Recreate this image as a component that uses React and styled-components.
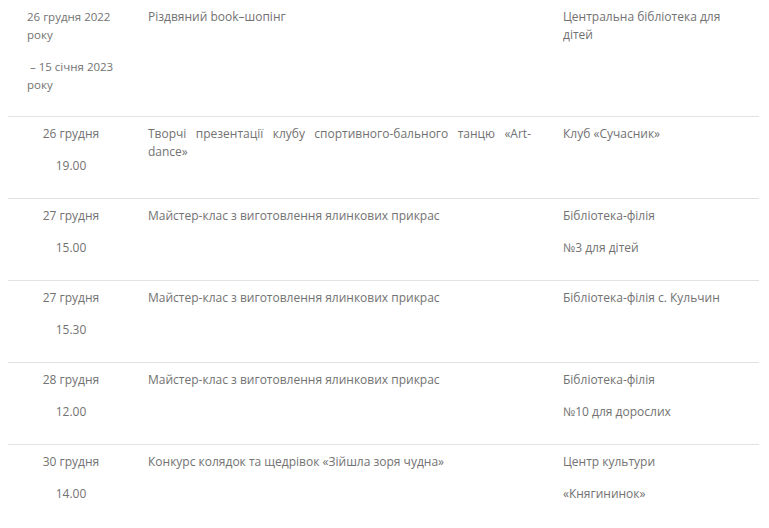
import React from 'react';
import styled, { createGlobalStyle } from 'styled-components';

const GlobalStyle = createGlobalStyle`
  body {
    margin: 0;
    background: #fff;
    font-family: "Open Sans", "Liberation Sans", sans-serif;
  }
`;

const Page = styled.div`
  padding: 0 8px;
`;

const Table = styled.div`
  width: 751px;
`;

const Row = styled.div`
  display: grid;
  grid-template-columns: 124px 415px 212px;
  border-top: ${(p) => (p.first ? 'none' : '1px solid #e2e2e2')};

  & > div {
    padding-bottom: ${(p) => (p.first ? 8 : 9)}px;
  }
`;

const Cell = styled.div`
  padding: 8px ${(p) => p.padRight || 16}px 9px ${(p) => p.padLeft || 16}px;
  text-align: ${(p) => p.align || 'left'};
`;

const Para = styled.p`
  margin: 0 0 14px;
  font-size: ${(p) => p.size || 12}px;
  line-height: 18px;
  color: #727272;
  text-align: ${(p) => p.align || 'inherit'};
`;

const events = [
  {
    date: ['26 грудня 2022 року', '\u00a0– 15 січня 2023 року'],
    dateAlign: 'left',
    dateSize: 11.5,
    title: 'Різдвяний book–шопінг',
    place: ['Центральна бібліотека для дітей'],
  },
  {
    date: ['26 грудня', '19.00'],
    title: 'Творчі презентації клубу спортивного-бального танцю «Art-dance»',
    place: ['Клуб «Сучасник»'],
  },
  {
    date: ['27 грудня', '15.00'],
    title: 'Майстер-клас з виготовлення ялинкових прикрас',
    place: ['Бібліотека-філія', '№3 для дітей'],
  },
  {
    date: ['27 грудня', '15.30'],
    title: 'Майстер-клас з виготовлення ялинкових прикрас',
    place: ['Бібліотека-філія с. Кульчин'],
  },
  {
    date: ['28 грудня', '12.00'],
    title: 'Майстер-клас з виготовлення ялинкових прикрас',
    place: ['Бібліотека-філія', '№10 для дорослих'],
  },
  {
    date: ['30 грудня', '14.00'],
    title: 'Конкурс колядок та щедрівок «Зійшла зоря чудна»',
    place: ['Центр культури', '«Княгининок»'],
  },
];

export default function App() {
  return (
    <>
      <GlobalStyle />
      <Page>
        <Table>
          {events.map((ev, i) => (
            <Row key={i} first={i === 0}>
              <Cell padLeft={19} padRight={17} align={ev.dateAlign || 'center'}>
                {ev.date.map((d, j) => (
                  <Para key={j} size={ev.dateSize}>{d}</Para>
                ))}
              </Cell>
              <Cell>
                <Para align="justify">{ev.title}</Para>
              </Cell>
              <Cell>
                {ev.place.map((p, j) => (
                  <Para key={j}>{p}</Para>
                ))}
              </Cell>
            </Row>
          ))}
        </Table>
      </Page>
    </>
  );
}
